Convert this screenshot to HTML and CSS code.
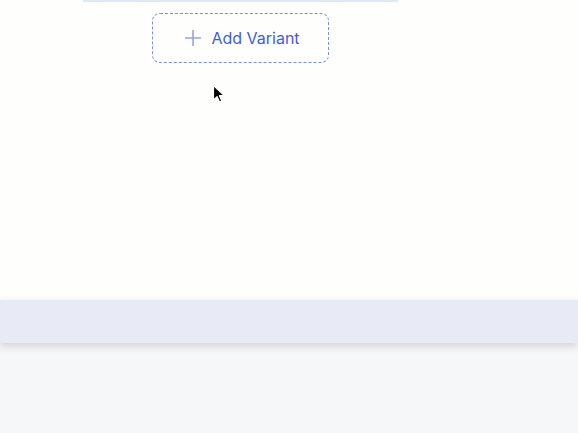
FILE: index.html
```html
<!DOCTYPE html>
<html lang="en">
<head>
    <meta charset="UTF-8">
    <meta name="viewport" content="width=device-width, initial-scale=1.0">
    <title>Variants</title>
    <link rel="stylesheet" href="styles.css">
</head>
<body>
    <div class="panel">
        <div class="variants">
            <div class="card-edge"></div>
            <button class="add-variant">
                <svg class="plus" width="18" height="18" viewBox="0 0 18 18">
                    <path d="M9 1v16M1 9h16" stroke="#97a5dc" stroke-width="1.6" fill="none"/>
                </svg>
                <span>Add Variant</span>
            </button>
        </div>
        <svg class="cursor" width="14" height="20" viewBox="0 0 14 20">
            <path d="M1.5 1.5v14.5l3.6-3.4 2.4 5.4 2.3-1-2.3-5.3h5z" fill="#000" stroke="#fff" stroke-width="1.2" stroke-linejoin="round"/>
        </svg>
    </div>
    <div class="footer-bar"></div>
    <div class="below"></div>
</body>
</html>
```

FILE: styles.css
```css
body {
    margin: 0;
    background: #f6f7f8;
    font-family: "Inter", "Noto Sans", sans-serif;
}
.panel {
    position: relative;
    height: 300px;
    background: #fefefc;
}
.variants {
    width: 315px;
    margin-left: 83px;
    display: flex;
    flex-direction: column;
    align-items: center;
}
.card-edge {
    align-self: stretch;
    height: 2px;
    background: #e2e7f6;
}
.add-variant {
    margin-top: 11px;
    width: 177px;
    height: 50px;
    display: flex;
    align-items: center;
    justify-content: center;
    gap: 9px;
    background: transparent;
    border: 1px dashed #7c90d8;
    border-radius: 8px;
    color: #3f5ed8;
    font-family: inherit;
    font-size: 16px;
    padding: 0 0 0 3px;
    cursor: pointer;
}
.plus {
    display: block;
}
.cursor {
    position: absolute;
    left: 212px;
    top: 84px;
}
.footer-bar {
    position: relative;
    height: 43px;
    background: #e8ebf5;
    box-shadow: 0 3px 8px rgba(40, 40, 70, 0.18);
}
.below {
    height: 90px;
    background: #f6f7f8;
}
```
